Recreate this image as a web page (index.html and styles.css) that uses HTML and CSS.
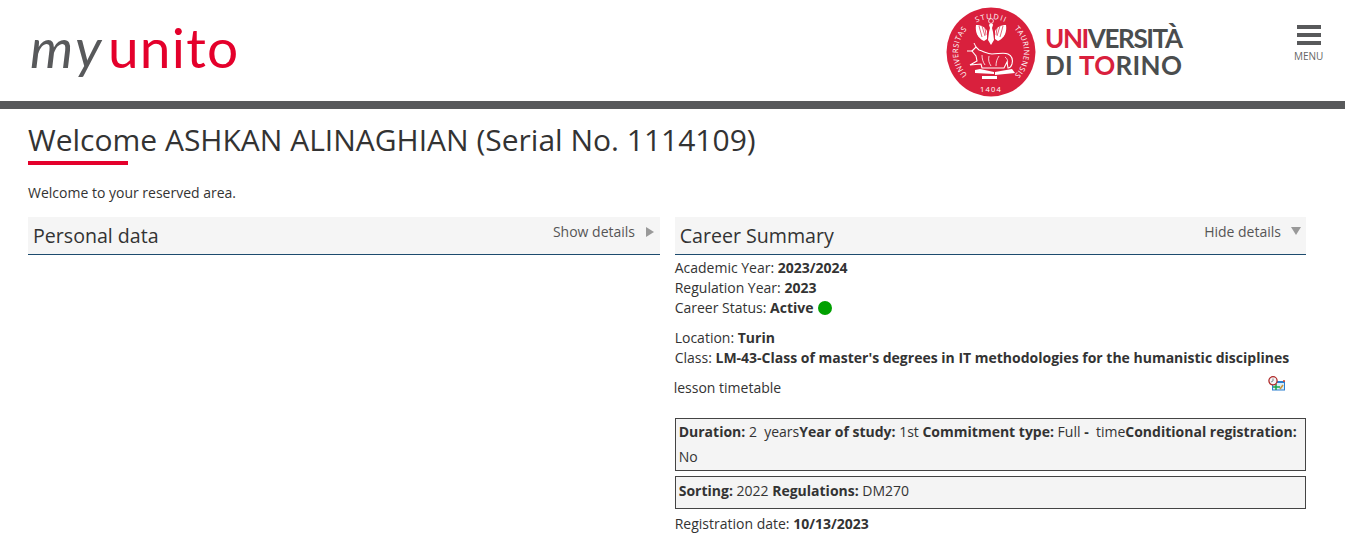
FILE: index.html
```html
<!DOCTYPE html>
<html lang="en">
<head>
  <meta charset="UTF-8">
  <title>MyUniTO</title>
  <link rel="stylesheet" href="styles.css">
</head>
<body>
  <header class="top">
    <div class="brand"><span class="brand-my">my</span><span class="brand-unito">unito</span></div>
    <div class="uni">
      <svg class="seal" width="90" height="90" viewBox="0 0 90 90">
        <defs>
          <path id="arcLeft" d="M21.700 68.300 A33 33 0 0 1 21.700 21.700"/>
          <path id="arcTop" d="M30 15.600 A33 33 0 0 1 60 15.600"/>
          <path id="arcRight" d="M68.300 21.700 A33 33 0 0 1 68.300 68.300"/>
        </defs>
        <circle cx="45" cy="45" r="44.500" fill="#d9203d"/>
        <text class="seal-text"><textPath href="#arcLeft" startOffset="50%" text-anchor="middle">UNIVERSITAS</textPath></text>
        <text class="seal-text seal-wide"><textPath href="#arcTop" startOffset="50%" text-anchor="middle">STUDII</textPath></text>
        <text class="seal-text"><textPath href="#arcRight" startOffset="50%" text-anchor="middle">TAURINENSIS</textPath></text>
        <text class="seal-text seal-wide" x="45" y="85" text-anchor="middle">1404</text>
        <!-- eagle -->
        <g transform="translate(0 -4)">
          <g fill="#fff">
            <path d="M43 22c1-2 4-2 4 0l-1 3 1 4 1 8-3 5-3-5 1-8 1-4z"/>
            <path d="M41 28c-2-4-6-6-11-6-1 6 1 13 8 16l3-2z"/>
            <path d="M49 28c2-4 6-6 11-6 1 6-1 13-8 16l-3-2z"/>
          </g>
          <path fill="none" stroke="#d9203d" stroke-width=".7" d="M33 23l3 11M36 23l3 10M39 25l1 7M57 23l-3 11M54 23l-3 10M51 25l-1 7"/>
          <circle cx="45" cy="18" r="2.400" fill="none" stroke="#fff" stroke-width=".8"/>
        </g>
        <!-- bull -->
        <g transform="translate(0 -4)">
          <path fill="#d9203d" stroke="#fff" stroke-width="1.100" d="M26 48l4-4 3 3c6 2 9 4 13 4 6 0 12-2 16 0 4 2 5 6 4 10-1 3-2 4-4 4l-1-6-3 6H36l-1-4-11 1 7-4-1-5z"/>
          <path fill="none" stroke="#fff" stroke-width=".8" d="M36 52c0 4 1 7 3 10M43 53c-1 4 0 7 2 10M53 53c-2 3-3 6-3 10M59 54c3 2 3 5 2 7"/>
          <path fill="none" stroke="#fff" stroke-width="1" d="M30 44l-2-4M26 48l-5 0"/>
        </g>
        <!-- books -->
        <path fill="#fff" d="M29 63l5-1 14 3v2l-19-1zM49 65l17-3 3 4-20 2zM36 69h15v3H36z"/>
      </svg>
      <div class="uni-name">
        <div class="uni-line1"><span class="red">UNI</span>VERSITÀ</div>
        <div class="uni-line2">DI <span class="red">TO</span>RINO</div>
      </div>
    </div>
    <div class="menu">
      <div class="burger"><span></span><span></span><span></span></div>
      <div class="menu-label">MENU</div>
    </div>
  </header>

  <main class="content">
    <h1>Welcome ASHKAN ALINAGHIAN (Serial No. 1114109)</h1>
    <p class="intro">Welcome to your reserved area.</p>

    <div class="columns">
      <section class="col">
        <div class="box-head">
          <h2>Personal data</h2>
          <span class="toggle">Show details <i class="arrow-right"></i></span>
        </div>
      </section>

      <section class="col">
        <div class="box-head">
          <h2>Career Summary</h2>
          <span class="toggle">Hide details <i class="arrow-down"></i></span>
        </div>
        <div class="details">
          <p>Academic Year: <b>2023/2024</b><br>
            Regulation Year: <b>2023</b><br>
            Career Status: <b>Active</b> <i class="dot"></i></p>
          <p>Location: <b>Turin</b><br>
            Class: <b>LM-43-Class of master's degrees in IT methodologies for the humanistic disciplines</b></p>
          <div class="timetable">
            <span>lesson timetable</span>
            <svg class="time-icon" width="17" height="15" viewBox="0 0 17 15">
              <rect x="4.500" y="5.500" width="12" height="8.500" fill="#d8ecfa" stroke="#2a7fd0"/>
              <path d="M5 5h11v2H5z" fill="#2a7fd0"/>
              <path d="M5 11h7M8 8v6" stroke="#1aa34a" stroke-width="1.500"/>
              <path d="M12 13l3-4" stroke="#c8963c" stroke-width="1.500"/>
              <circle cx="16" cy="5" r="1" fill="#d8432c"/>
              <circle cx="5" cy="4.800" r="4.100" fill="#f4f4f4" stroke="#b02a2a" stroke-width="1.300"/>
              <path d="M5 2.500v2.500l-2 1" fill="none" stroke="#667" stroke-width=".8"/>
            </svg>
          </div>
          <div class="info-box info-tall"><b>Duration:</b> 2 &nbsp;years<b>Year of study:</b> 1st <b>Commitment type:</b> Full <b>-</b> &nbsp;time<b>Conditional registration:</b> No</div>
          <div class="info-box"><b>Sorting:</b> 2022 <b>Regulations:</b> DM270</div>
          <p class="reg-date">Registration date: <b>10/13/2023</b></p>
        </div>
      </section>
    </div>
  </main>
</body>
</html>
```

FILE: styles.css
```css
body {
  margin: 0;
  background: #fff;
  color: #333;
  font-family: "Open Sans", sans-serif;
  font-size: 14px;
  line-height: 20px;
}
.top {
  height: 101px;
  border-bottom: 8px solid #58595b;
  display: flex;
  align-items: flex-start;
}
.brand {
  margin: 12px 0 0 30px;
  font-family: Lato, sans-serif;
  font-size: 55px;
  line-height: 70px;
  flex: 1;
}
.brand-my {
  color: #58595b;
  font-style: italic;
  font-weight: 400;
  letter-spacing: 2.500px;
}
.brand-unito {
  color: #e4002b;
  margin-left: 4px;
  letter-spacing: 1.200px;
}
.uni {
  display: flex;
  align-items: center;
  margin: 7px 0 0 0;
  width: 348px;
}
.seal-text {
  font-family: "Open Sans", sans-serif;
  font-size: 7.500px;
  fill: #fff;
  letter-spacing: 0.4px;
}
.seal-wide {
  letter-spacing: 1.200px;
}
.uni-name {
  margin: 0 0 0 9px;
  font-family: Lato, sans-serif;
  font-size: 26px;
  line-height: 27px;
  color: #4a4d4e;
  font-weight: 700;
}
.uni-line1 {
  letter-spacing: -1.400px;
}
.uni-line2 {
  letter-spacing: 0.300px;
}
.red {
  color: #d9203d;
}
.menu {
  width: 51px;
  margin-top: 25px;
}
.burger {
  width: 24px;
  display: flex;
  flex-direction: column;
  gap: 4px;
  margin: 0 0 4px 3px;
}
.burger span {
  height: 4px;
  background: #58595b;
}
.menu-label {
  font-size: 10px;
  line-height: 14px;
  color: #666;
}
.content {
  padding: 0 39px 0 28px;
}
h1 {
  display: inline-block;
  margin: 13px 0 0;
  font-size: 30px;
  line-height: 36px;
  font-weight: 400;
  color: #333;
}
h1::after {
  content: "";
  display: block;
  width: 100px;
  height: 4px;
  margin-top: 3px;
  background: #e4002b;
}
.intro {
  margin: 18px 0 14px;
}
.columns {
  display: grid;
  grid-template-columns: 632px 631.300px;
  gap: 14.700px;
}
.box-head {
  height: 37px;
  display: flex;
  justify-content: space-between;
  background: #f5f5f5;
  border-bottom: 1px solid #1d4b6e;
  padding: 0 5px;
}
h2 {
  margin: 0;
  font-size: 19.600px;
  line-height: 37px;
  font-weight: 400;
  color: #333;
}
.toggle {
  display: flex;
  align-items: center;
  height: 30px;
  color: #555;
}
.arrow-right {
  margin: 0 1px 0 11px;
  border-left: 8px solid #999;
  border-top: 5.500px solid transparent;
  border-bottom: 5.500px solid transparent;
}
.arrow-down {
  margin: 0 0 2px 10px;
  border-top: 8px solid #999;
  border-left: 5.500px solid transparent;
  border-right: 5.500px solid transparent;
}
.details p {
  margin: 0;
}
.details > p:first-child {
  margin: 3px 0 10px;
}
.dot {
  display: inline-block;
  width: 14px;
  height: 14px;
  border-radius: 50%;
  background: #00a000;
  vertical-align: -2px;
  margin-left: 1px;
}
.timetable {
  display: flex;
  justify-content: space-between;
  align-items: flex-start;
  margin: 10px 21px 20px -1px;
}
.time-icon {
  margin-top: -2px;
  margin-bottom: 7px;
}
.info-box {
  border: 1px solid #444;
  background: #f4f4f4;
  padding: 1px 3px 5px;
  margin-bottom: 5px;
  line-height: 25px;
}
.info-box.info-tall {
  padding: 0 3px 1px;
}
.details .reg-date {
  margin-top: 5px;
}
```
